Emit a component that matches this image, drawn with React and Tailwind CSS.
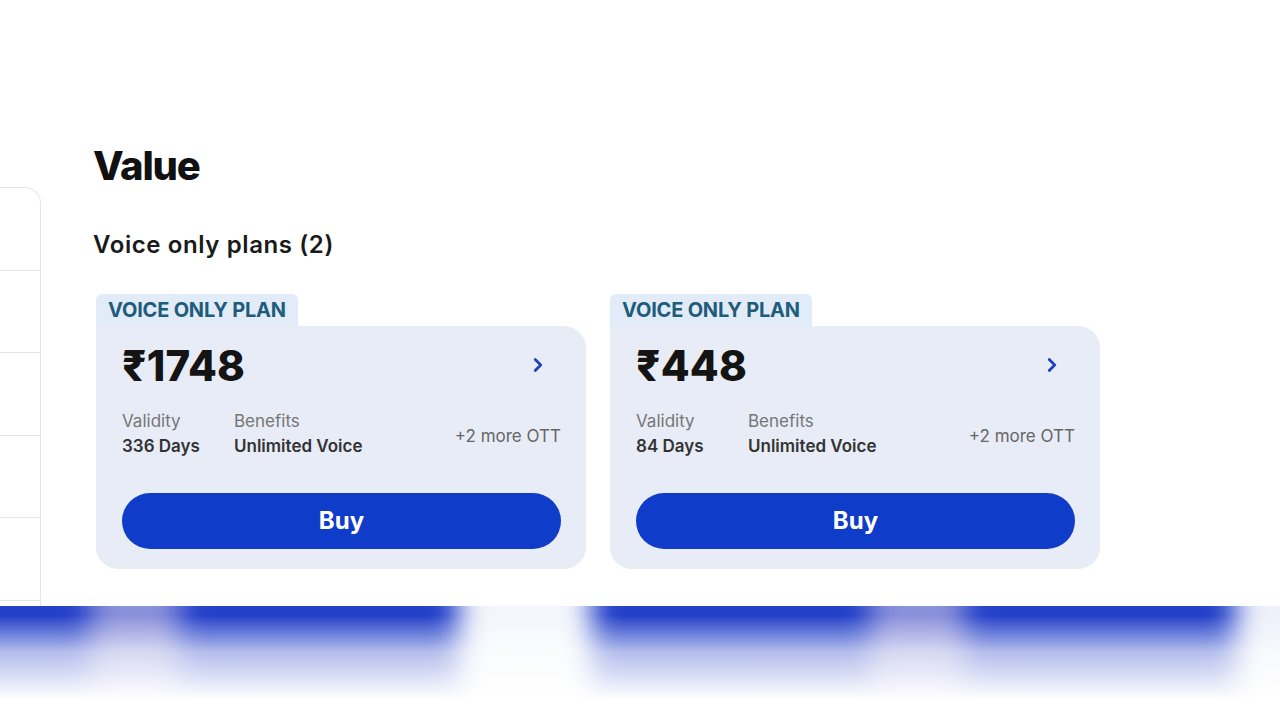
import React from 'react';
import { ChevronRight } from 'lucide-react';

const plans = [
  { price: '1748', validity: '336 Days', benefit: 'Unlimited Voice' },
  { price: '448', validity: '84 Days', benefit: 'Unlimited Voice' },
];

const PlanCard = ({ plan }) => {
  return (
    <div className="flex flex-col w-[490px]">
      <div className="self-start bg-[#e1ecf8] rounded-t-[6px] h-[32px] px-[12px] flex items-center">
        <span className="text-[20px] font-bold text-[#1f5c7c] tracking-[-0.01em] leading-none">VOICE ONLY PLAN</span>
      </div>
      <div className="bg-[#e8ecf7] rounded-[22px] rounded-tl-none pt-[18px] pb-[20px] pl-[26px] pr-[25px] flex flex-col">
        <div className="flex items-center justify-between h-[44px]">
          <span className="text-[42px] font-extrabold text-[#141414] tracking-[0.005em] leading-none">₹{plan.price}</span>
          <ChevronRight size={22} strokeWidth={3} className="text-[#1f40b8] mr-[12px] -mt-[2px]" />
        </div>
        <div className="flex items-center mt-[21px] text-[17px] leading-[25px]">
          <div className="flex flex-col w-[112px]">
            <span className="text-[#767676]">Validity</span>
            <span className="font-semibold text-[#333333]">{plan.validity}</span>
          </div>
          <div className="flex flex-col">
            <span className="text-[#767676]">Benefits</span>
            <span className="font-semibold text-[#333333]">{plan.benefit}</span>
          </div>
          <span className="ml-auto mt-[6px] text-[#666666]">+2 more OTT</span>
        </div>
        <button className="mt-[34px] h-[56px] w-full rounded-full bg-[#0f3cc9] text-white text-[24px] font-bold">
          Buy
        </button>
      </div>
    </div>
  );
};

export default function App() {
  return (
    <div className="w-[1280px] h-[720px] bg-white overflow-hidden font-['Inter','Noto_Sans',sans-serif]">
      <div className="flex h-[606px]">
        <aside className="w-[41px] mt-[187px] border-t border-r border-[#e6e6e6] rounded-tr-[16px] flex flex-col overflow-hidden">
          <div className="h-[83px] border-b border-[#e6e6e6]" />
          <div className="h-[82px] border-b border-[#e6e6e6]" />
          <div className="h-[83px] border-b border-[#e6e6e6]" />
          <div className="h-[82px] border-b border-[#e6e6e6]" />
          <div className="h-[83px] border-b border-[#e6e6e6]" />
        </aside>
        <main className="pl-[52px] pt-[142px]">
          <h1 className="text-[40px] font-extrabold leading-[1.2] tracking-[-0.03em] text-[#111111]">Value</h1>
          <h2 className="mt-[41px] text-[24px] font-semibold leading-[1.2] tracking-[0.025em] text-[#1a1a1a]">Voice only plans (2)</h2>
          <div className="mt-[34px] flex gap-[24px] pl-[3px]">
            {plans.map((p) => (
              <PlanCard key={p.price} plan={p} />
            ))}
          </div>
        </main>
      </div>
      <div className="relative h-[114px] overflow-hidden bg-white">
        <div className="flex -mt-[30px] -ml-[40px] h-[150px] blur-[14px]">
          <div className="shrink-0 w-[130px] bg-[#2340c8]" />
          <div className="shrink-0 w-[90px] bg-[#8a90da]" />
          <div className="shrink-0 w-[278px] bg-[#2340c8]" />
          <div className="shrink-0 w-[134px] bg-[#f4f6fc]" />
          <div className="shrink-0 w-[278px] bg-[#2340c8]" />
          <div className="shrink-0 w-[95px] bg-[#8a90da]" />
          <div className="shrink-0 w-[270px] bg-[#2340c8]" />
          <div className="shrink-0 w-[100px] bg-[#eef0fa]" />
        </div>
        <div className="absolute inset-0 bg-gradient-to-b from-transparent from-[8%] via-white/65 via-[40%] to-white to-[82%]" />
      </div>
    </div>
  );
}
